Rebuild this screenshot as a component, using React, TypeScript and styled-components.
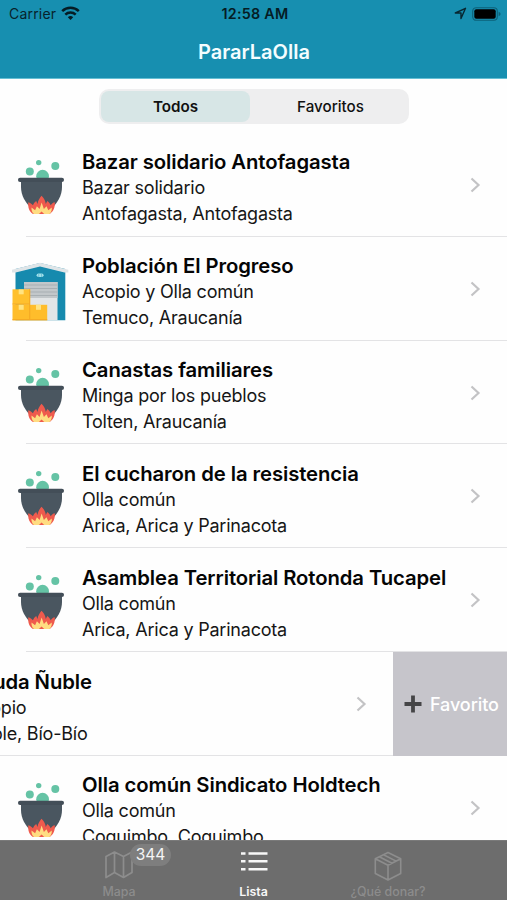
import React from 'react';
import styled, { createGlobalStyle, css } from 'styled-components';

const Global = createGlobalStyle`
  * { box-sizing: border-box; }
  body { margin: 0; background: #fff; font-family: Inter, "Liberation Sans", sans-serif; color: #050505; }
`;

const Screen = styled.div`
  width: 507px;
  height: 900px;
  overflow: hidden;
  display: flex;
  flex-direction: column;
  background: #fefefe;
`;

const Header = styled.header`
  height: 79px;
  flex: none;
  background: #178fb0;
  border-bottom: 1px solid #65bfd4;
`;

const StatusBar = styled.div`
  height: 27px;
  display: grid;
  grid-template-columns: 1fr auto 1fr;
  align-items: center;
  padding: 0 6px 0 9px;
  line-height: 27px;
  color: #07232c;
`;

const Carrier = styled.div`
  display: flex;
  align-items: center;
  gap: 5px;
  font-size: 14px;
  letter-spacing: 0.2px;
`;

const Clock = styled.div`
  font-weight: 600;
  font-size: 14.3px;
  letter-spacing: 0.25px;
  color: #051c24;
`;

const Indicators = styled.div`
  display: flex;
  justify-content: flex-end;
  align-items: center;
  gap: 5px;
`;

const Heading = styled.h1`
  margin: 0;
  height: 51px;
  padding-left: 1px;
  line-height: 50px;
  text-align: center;
  font-size: 20px;
  font-weight: 600;
  color: #f4fdff;
`;

const FilterBar = styled.div`
  height: 54px;
  flex: none;
  padding: 10px 0 0 1px;
  display: flex;
  justify-content: center;
`;

const Segments = styled.div`
  width: 310px;
  height: 35px;
  padding: 2px;
  border-radius: 10px;
  background: #eeeeef;
  display: grid;
  grid-template-columns: 149px 1fr;
`;

const Segment = styled.button<{ $active?: boolean }>`
  border: 0;
  padding: ${(p) => (p.$active ? '0 0 1px' : '0 0 1px 4px')};
  border-radius: 8px;
  font-family: inherit;
  font-size: 15.2px;
  color: #111;
  font-weight: ${(p) => (p.$active ? 600 : 500)};
  background: ${(p) => (p.$active ? '#d7e6e6' : 'transparent')};
`;

const List = styled.main`
  flex: 1;
  min-height: 0;
  overflow: hidden;
`;

const Row = styled.article<{ $swiped?: boolean }>`
  height: 103.83px;
  width: 507px;
  display: flex;
  background: linear-gradient(#e3e3e5, #e3e3e5) 26px 100% / 100% 1px no-repeat;
  ${(p) =>
    p.$swiped &&
    css`
      justify-content: flex-end;
      background-position: 0 100%;
    `}
`;

const Cell = styled.div`
  width: 507px;
  flex: none;
  display: flex;
`;

const Thumb = styled.div`
  width: 82px;
  flex: none;
`;

const Info = styled.div`
  flex: 1;
  min-width: 0;
  padding-top: 15.4px;
  white-space: nowrap;
`;

const Name = styled.h2`
  margin: 0;
  font-size: 20.3px;
  line-height: 27px;
  font-weight: 600;
  letter-spacing: -0.09px;
`;

const Detail = styled.p`
  margin: 0;
  font-size: 18px;
  line-height: 26px;
  color: #161616;
  letter-spacing: -0.21px;
`;

const Disclosure = styled.div`
  width: 37px;
  flex: none;
  display: flex;
  align-items: center;
`;

const FavoriteAction = styled.button`
  width: 114px;
  flex: none;
  border: 0;
  padding: 0 0 0 11px;
  display: flex;
  align-items: center;
  gap: 8px;
  background: #c6c5cb;
  color: #fff;
  font-family: inherit;
  font-size: 18px;
  font-weight: 500;
  letter-spacing: -0.1px;
`;

const TabBar = styled.nav`
  height: 60px;
  flex: none;
  display: flex;
  justify-content: center;
  background: #6d6d6d;
  border-top: 1px solid #7a7a7a;
`;

const Tab = styled.button<{ $active?: boolean }>`
  width: 134.5px;
  border: 0;
  padding: 7px 0 0;
  background: none;
  display: flex;
  flex-direction: column;
  align-items: center;
  font-family: inherit;
  font-size: 12.4px;
  white-space: nowrap;
  font-weight: ${(p) => (p.$active ? 600 : 500)};
  color: ${(p) => (p.$active ? '#f8f8f8' : '#8c8c8c')};
`;

const TabIcon = styled.span<{ $drop?: number }>`
  position: relative;
  height: 36px;
  padding-top: ${(p) => p.$drop ?? 0}px;
  display: flex;
  align-items: flex-start;
`;

const TabLabel = styled.span`
  line-height: 15px;
`;

const Badge = styled.span`
  position: absolute;
  left: 25px;
  top: -4px;
  width: 41px;
  height: 22px;
  border-radius: 11px;
  background: #7e7e7e;
  color: #f5f5f5;
  font-size: 15.5px;
  font-weight: 400;
  line-height: 21px;
  text-align: center;
`;

const Wifi = () => (
  <svg width="19" height="15" viewBox="0 0 19 15" fill="none" stroke="#051c24" strokeWidth="2.5">
    <path d="M1.2 5.2a12 12 0 0 1 16.6 0" />
    <path d="M4.3 8.6a7.5 7.5 0 0 1 10.4 0" />
    <path d="M6.8 11.2a4 4 0 0 1 5.4 0L9.5 14Z" fill="#051c24" stroke="none" />
  </svg>
);

const Location = () => (
  <svg width="13" height="13" viewBox="0 0 13 13" fill="none" stroke="#072731" strokeWidth="1.4" strokeLinejoin="round">
    <path d="M1.3 6 11.5 1.3 7 11.5V6Z" />
  </svg>
);

const Battery = () => (
  <svg width="29" height="14" viewBox="0 0 29 14">
    <rect x=".7" y=".7" width="24.6" height="12.6" rx="3.5" fill="none" stroke="#0d6178" strokeWidth="1.1" />
    <rect x="2.3" y="2.3" width="21.4" height="9.4" rx="2" fill="#000" />
    <path d="M26.6 4.8q2 .7 2 2.2t-2 2.2Z" fill="#0d6178" />
  </svg>
);

const Pot = () => (
  <svg width="82" height="104" viewBox="0 0 82 104">
    <g fill="#65c3a5">
      <circle cx="29.8" cy="38.4" r="4" />
      <circle cx="38.7" cy="29.6" r="2.7" />
      <circle cx="55.3" cy="33.1" r="4" />
      <circle cx="42.6" cy="43.2" r="6.4" />
    </g>
    <path d="M21 47h41v7c0 9-5 16.500-10.500 21.500h-20C26 70.500 21 63 21 54Z" fill="#4a5660" />
    <rect x="18" y="44.700" width="46" height="4.300" rx="2.100" fill="#434e58" />
    <path d="M28.300 69.300c2 .5 3.300 1.700 4.600 3 .7-1.500 1.500-3.100 3.300-4.300l1.300 3c.4-3.500 2.200-6 4-8.300 2.300 2.400 4 5 4.300 8.300l1.500-3c1.800 1.200 2.700 2.700 3.300 4.300 1.200-1.600 2.500-2.700 4.200-3 .4 5-1.300 9.200-5 11.600H33c-4-2.300-5.200-6.900-4.700-11.600Z" fill="#ef5a4d" />
    <path d="m31.500 74.500 3.600 2.800 1.800-4 2.700 2.700 2-6.400 2.300 6.400 2.600-2.700 1.800 4 3.500-2.800c.2 2.700-.7 5-2.300 6.400h-5.300l-2.600-2.400-2.700 2.400h-5c-1.800-1.400-2.600-3.700-2.400-6.400Z" fill="#ffdd82" />
  </svg>
);

const Warehouse = () => (
  <svg width="82" height="104" viewBox="0 0 82 104">
    <path d="M15.500 32 40 26l25.300 6v51.300H15.500Z" fill="#168aae" />
    <path d="M12 32.800 40 25.800l28.300 7v2.600h-3.800L40 29.600l-24.300 5.800H12Z" fill="#dfe5e8" />
    <rect x="36.600" y="36.500" width="7" height="3.600" rx="1.800" fill="#a2dfea" />
    <path d="M38.700 36.500v3.600m2.800-3.600v3.600" stroke="#4ab3cb" strokeWidth=".6" />
    <rect x="24" y="45" width="33.500" height="38.300" fill="#e2e5e7" />
    <rect x="24" y="45" width="33.500" height="16" fill="#c2c7ca" />
    <path d="M24 48h33.500M24 51.500h33.500M24 55h33.500M24 58.500h33.500" stroke="#a8afb3" strokeWidth="1" />
    <rect x="12.500" y="52.300" width="17.500" height="15.500" fill="#ffc02e" />
    <rect x="12.500" y="67.800" width="17.500" height="15.500" fill="#ffbd2b" />
    <rect x="30" y="67.800" width="17.200" height="15.500" fill="#ffbd2b" />
    <path d="M12.500 67H30M12.500 82.700h34.700M29.700 52.300v31" stroke="#f5aa24" strokeWidth="1.200" />
    <g fill="#ffe382">
      <rect x="18.700" y="52.300" width="5" height="5" />
      <rect x="18.700" y="67.800" width="5" height="5" />
      <rect x="36" y="67.800" width="5" height="5" />
    </g>
  </svg>
);

const Chevron = () => (
  <svg width="11" height="16" viewBox="0 0 11 16" fill="none" stroke="#c3c3c5" strokeWidth="2.200">
    <path d="m1.500 1.500 7 6.500-7 6.500" />
  </svg>
);

const Plus = () => (
  <svg width="18" height="18" viewBox="0 0 18 18" stroke="#454547" strokeWidth="3.800">
    <path d="M9 .5v17M.5 9h17" />
  </svg>
);

const MapIcon = () => (
  <svg width="28" height="28" viewBox="0 0 28 28" fill="none" stroke="#8d8d8d" strokeWidth="1.700" strokeLinejoin="round">
    <path d="M1 5.500 9.500 1l9 4.500L27 1v20.500l-8.500 5-9-5-8.500 5ZM9.500 1v20.500M18.500 5.500v21" />
  </svg>
);

const ListIcon = () => (
  <svg width="28" height="28" viewBox="0 0 28 28" fill="none" stroke="#f7f7f7" strokeWidth="2.500">
    <path d="M1 5.500h4.500M8.500 5.500h19M1 13.300h4.500M8.500 13.300h19M1 21.200h4.500M8.500 21.200h19" />
  </svg>
);

const BoxIcon = () => (
  <svg width="28" height="30" viewBox="0 0 28 30" fill="none" stroke="#8d8d8d" strokeWidth="1.600" strokeLinejoin="round">
    <path d="m14 1.500 12.700 6.300v14.700L14 29 1.300 22.500V7.800ZM1.300 7.800 14 14.200l12.700-6.400M14 14.200V29M5.300 5.800 18 12.200M9.500 3.700l12.700 6.400" />
  </svg>
);

interface Place {
  name: string;
  kind: string;
  where: string;
  warehouse?: boolean;
  swiped?: boolean;
}

const places: Place[] = [
  { name: 'Bazar solidario Antofagasta', kind: 'Bazar solidario', where: 'Antofagasta, Antofagasta' },
  { name: 'Población El Progreso', kind: 'Acopio y Olla común', where: 'Temuco, Araucanía', warehouse: true },
  { name: 'Canastas familiares', kind: 'Minga por los pueblos', where: 'Tolten, Araucanía' },
  { name: 'El cucharon de la resistencia', kind: 'Olla común', where: 'Arica, Arica y Parinacota' },
  { name: 'Asamblea Territorial Rotonda Tucapel', kind: 'Olla común', where: 'Arica, Arica y Parinacota' },
  { name: 'Ayuda Ñuble', kind: 'Acopio', where: 'Ñuble, Bío-Bío', warehouse: true, swiped: true },
  { name: 'Olla común Sindicato Holdtech', kind: 'Olla común', where: 'Coquimbo, Coquimbo' },
];

const PlaceRow = ({ place }: { place: Place }) => (
  <Row $swiped={place.swiped}>
    <Cell>
      <Thumb>{place.warehouse ? <Warehouse /> : <Pot />}</Thumb>
      <Info>
        <Name>{place.name}</Name>
        <Detail>{place.kind}</Detail>
        <Detail>{place.where}</Detail>
      </Info>
      <Disclosure>
        <Chevron />
      </Disclosure>
    </Cell>
    {place.swiped && (
      <FavoriteAction>
        <Plus />
        Favorito
      </FavoriteAction>
    )}
  </Row>
);

export default function App() {
  return (
    <>
      <Global />
      <Screen>
        <Header>
          <StatusBar>
            <Carrier>
              Carrier <Wifi />
            </Carrier>
            <Clock>12:58 AM</Clock>
            <Indicators>
              <Location />
              <Battery />
            </Indicators>
          </StatusBar>
          <Heading>PararLaOlla</Heading>
        </Header>
        <FilterBar>
          <Segments>
            <Segment $active>Todos</Segment>
            <Segment>Favoritos</Segment>
          </Segments>
        </FilterBar>
        <List>
          {places.map((place) => (
            <PlaceRow key={place.name} place={place} />
          ))}
        </List>
        <TabBar>
          <Tab>
            <TabIcon $drop={3}>
              <MapIcon />
              <Badge>344</Badge>
            </TabIcon>
            <TabLabel>Mapa</TabLabel>
          </Tab>
          <Tab $active>
            <TabIcon>
              <ListIcon />
            </TabIcon>
            <TabLabel>Lista</TabLabel>
          </Tab>
          <Tab>
            <TabIcon $drop={3}>
              <BoxIcon />
            </TabIcon>
            <TabLabel>¿Qué donar?</TabLabel>
          </Tab>
        </TabBar>
      </Screen>
    </>
  );
}
